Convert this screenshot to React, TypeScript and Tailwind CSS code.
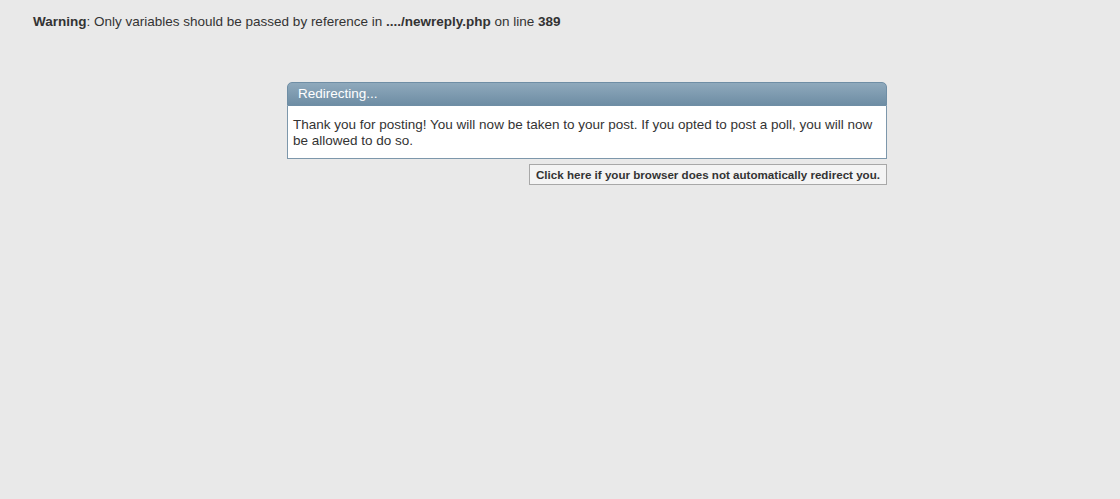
export default function App() {
  return (
    <div className="min-h-[499px] bg-[#e9e9e9] font-['Liberation_Sans',sans-serif] text-[13.5px] text-[#333]">
      <div className="px-[33px] pt-[14px] leading-[16px]">
        <b>Warning</b>: Only variables should be passed by reference in <b>..../newreply.php</b> on
        line <b>389</b>
      </div>

      <div className="mx-auto mt-[52px] w-[600px] translate-x-[27px]">
        <div className="rounded-t-[5px] border border-[#6f8ea5] bg-gradient-to-b from-[#8fa9bc] to-[#6e8da4] px-[10px] py-[4px] leading-[14px] text-white">
          Redirecting...
        </div>
        <div className="border border-t-0 border-[#7d97ab] bg-white px-[5px] pt-[11px] pb-[9px] leading-[16px]">
          Thank you for posting! You will now be taken to your post. If you opted to post a poll, you will
          now be allowed to do so.
        </div>
        <div className="mt-[5px] flex justify-end">
          <button className="border border-[#a8a8a8] bg-[#f4f4f4] px-[6px] py-[2px] text-[11.6px] font-bold leading-[15px] text-[#333]">
            Click here if your browser does not automatically redirect you.
          </button>
        </div>
      </div>
    </div>
  );
}
